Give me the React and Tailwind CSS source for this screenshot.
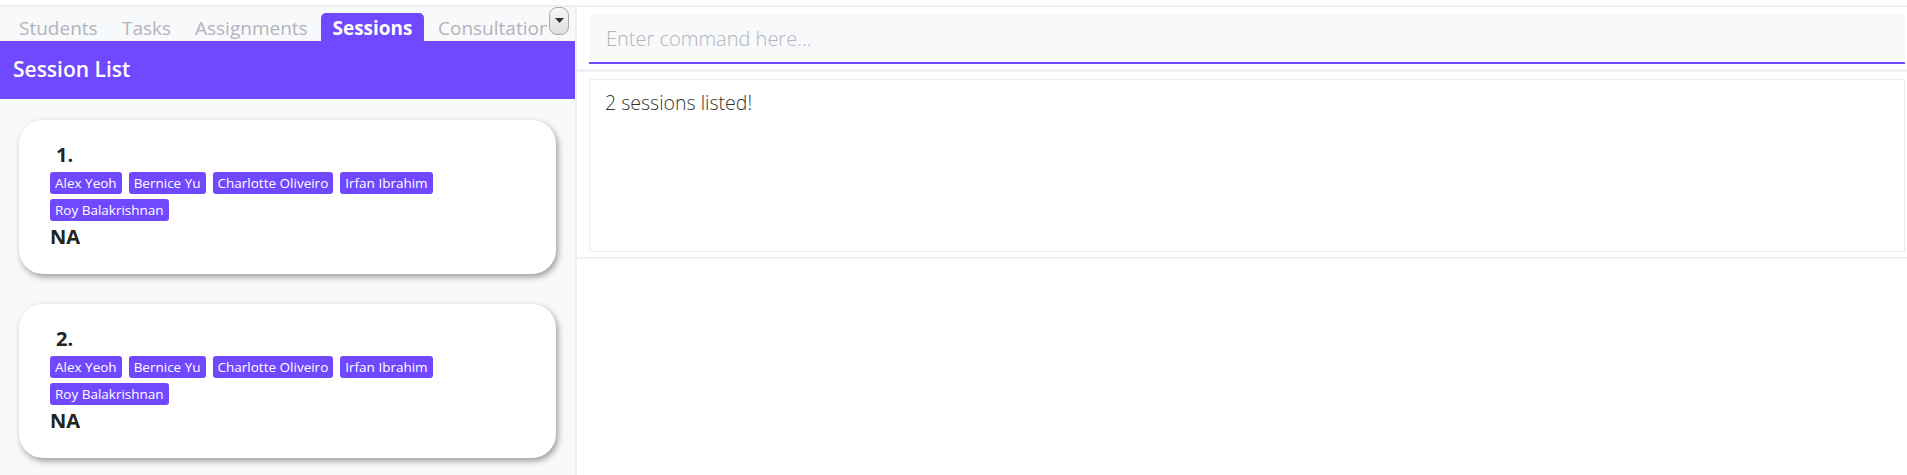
import React from 'react';

const PURPLE = 'bg-[#7048ff]';

const tabs = [
  { label: 'Students', width: 'w-[103px]' },
  { label: 'Tasks', width: 'w-[73px]' },
  { label: 'Assignments', width: 'w-[138px]' },
  { label: 'Sessions', width: 'w-[103px]', active: true },
  { label: 'Consultations', width: 'w-[140px]' },
];

const sessions = [
  {
    id: 1,
    students: ['Alex Yeoh', 'Bernice Yu', 'Charlotte Oliveiro', 'Irfan Ibrahim', 'Roy Balakrishnan'],
    note: 'NA',
  },
  {
    id: 2,
    students: ['Alex Yeoh', 'Bernice Yu', 'Charlotte Oliveiro', 'Irfan Ibrahim', 'Roy Balakrishnan'],
    note: 'NA',
  },
];

const SessionCard = ({ session }) => (
  <div className="w-[537px] h-[154px] shrink-0 bg-white rounded-[24px] shadow-[2px_3px_6px_rgba(0,0,0,0.38)] pl-[31px] pt-[22px]">
    <div className="pl-[6px] text-[20px] leading-[26px] font-bold text-[#222]">{session.id}.</div>
    <div className="mt-[4px] w-[440px] flex flex-wrap gap-x-[7px] gap-y-[5px]">
      {session.students.map((name) => (
        <span
          key={name}
          className="h-[22px] px-[5px] rounded-[3px] bg-[#7048ff] text-white text-[13.5px] leading-[22px] whitespace-nowrap"
        >
          {name}
        </span>
      ))}
    </div>
    <div className="mt-[3px] text-[20px] leading-[26px] font-bold text-[#222]">{session.note}</div>
  </div>
);

export default function App() {
  return (
    <div className="w-[1907px] h-[475px] overflow-hidden bg-white flex flex-col font-['Open_Sans',sans-serif]">
      <div className="h-[5px] shrink-0" />
      <div className="h-[2px] shrink-0 bg-[#eff0f5]" />
      <div className="flex flex-1 min-h-0">
        {/* Left: tabbed session list */}
        <aside className="w-[575px] shrink-0 bg-[#f8f9fb] flex flex-col">
          <div className="h-[34px] shrink-0 flex pl-[6px]">
            <div className="w-[541px] h-full flex items-end overflow-hidden">
              {tabs.map((tab) => (
                <div
                  key={tab.label}
                  className={`${tab.width} h-[28px] shrink-0 flex items-center justify-center pt-[3px] text-[19px] whitespace-nowrap ${
                    tab.active
                      ? 'bg-[#7048ff] text-white font-bold rounded-t-[5px] ml-[1px] mr-[1px]'
                      : 'text-[#b3b3bb] justify-start pl-[13px]'
                  }`}
                >
                  {tab.label}
                </div>
              ))}
            </div>
            <div className="ml-[2px] w-[20px] h-[28px] rounded-[8px] border border-[#a9a9a9] bg-gradient-to-b from-[#f7f7f7] to-[#dedede] flex justify-center pt-[10px]">
              <svg width="9" height="5" viewBox="0 0 9 5">
                <polygon points="0,0 9,0 4.5,5" fill="#333" />
              </svg>
            </div>
          </div>
          <div className={`h-[58px] shrink-0 ${PURPLE} flex items-center px-[13px] text-white text-[21px] font-semibold`}>
            Session List
          </div>
          <div className="flex flex-col gap-[30px] pl-[19px] pt-[21px]">
            {sessions.map((s) => (
              <SessionCard key={s.id} session={s} />
            ))}
          </div>
        </aside>

        <div className="w-[2px] shrink-0 bg-[#eff0f5]" />

        {/* Right: command box and result display */}
        <main className="flex-1 flex flex-col pt-[7px]">
          <div className="pl-[12px] pr-[2px]">
            <input
              className="w-full h-[50px] bg-[#f8f9fb] border-b-2 border-[#7048ff] pl-[17px] text-[20px] font-light text-[#333] outline-none placeholder:text-[#b3b3bb] font-['Open_Sans',sans-serif]"
              placeholder="Enter command here..."
            />
          </div>
          <div className="mt-[5px] h-[3px] bg-[#eff0f5]" />
          <div className="mt-[7px] pl-[12px] pr-[2px]">
            <div className="h-[173px] border border-[#eeeeee] pl-[15px] pt-[10px] text-[19.5px] leading-[26px] font-light text-[#333]">
              2 sessions listed!
            </div>
          </div>
          <div className="mt-[5px] h-[2px] bg-[#eff0f5]" />
        </main>
      </div>
    </div>
  );
}
